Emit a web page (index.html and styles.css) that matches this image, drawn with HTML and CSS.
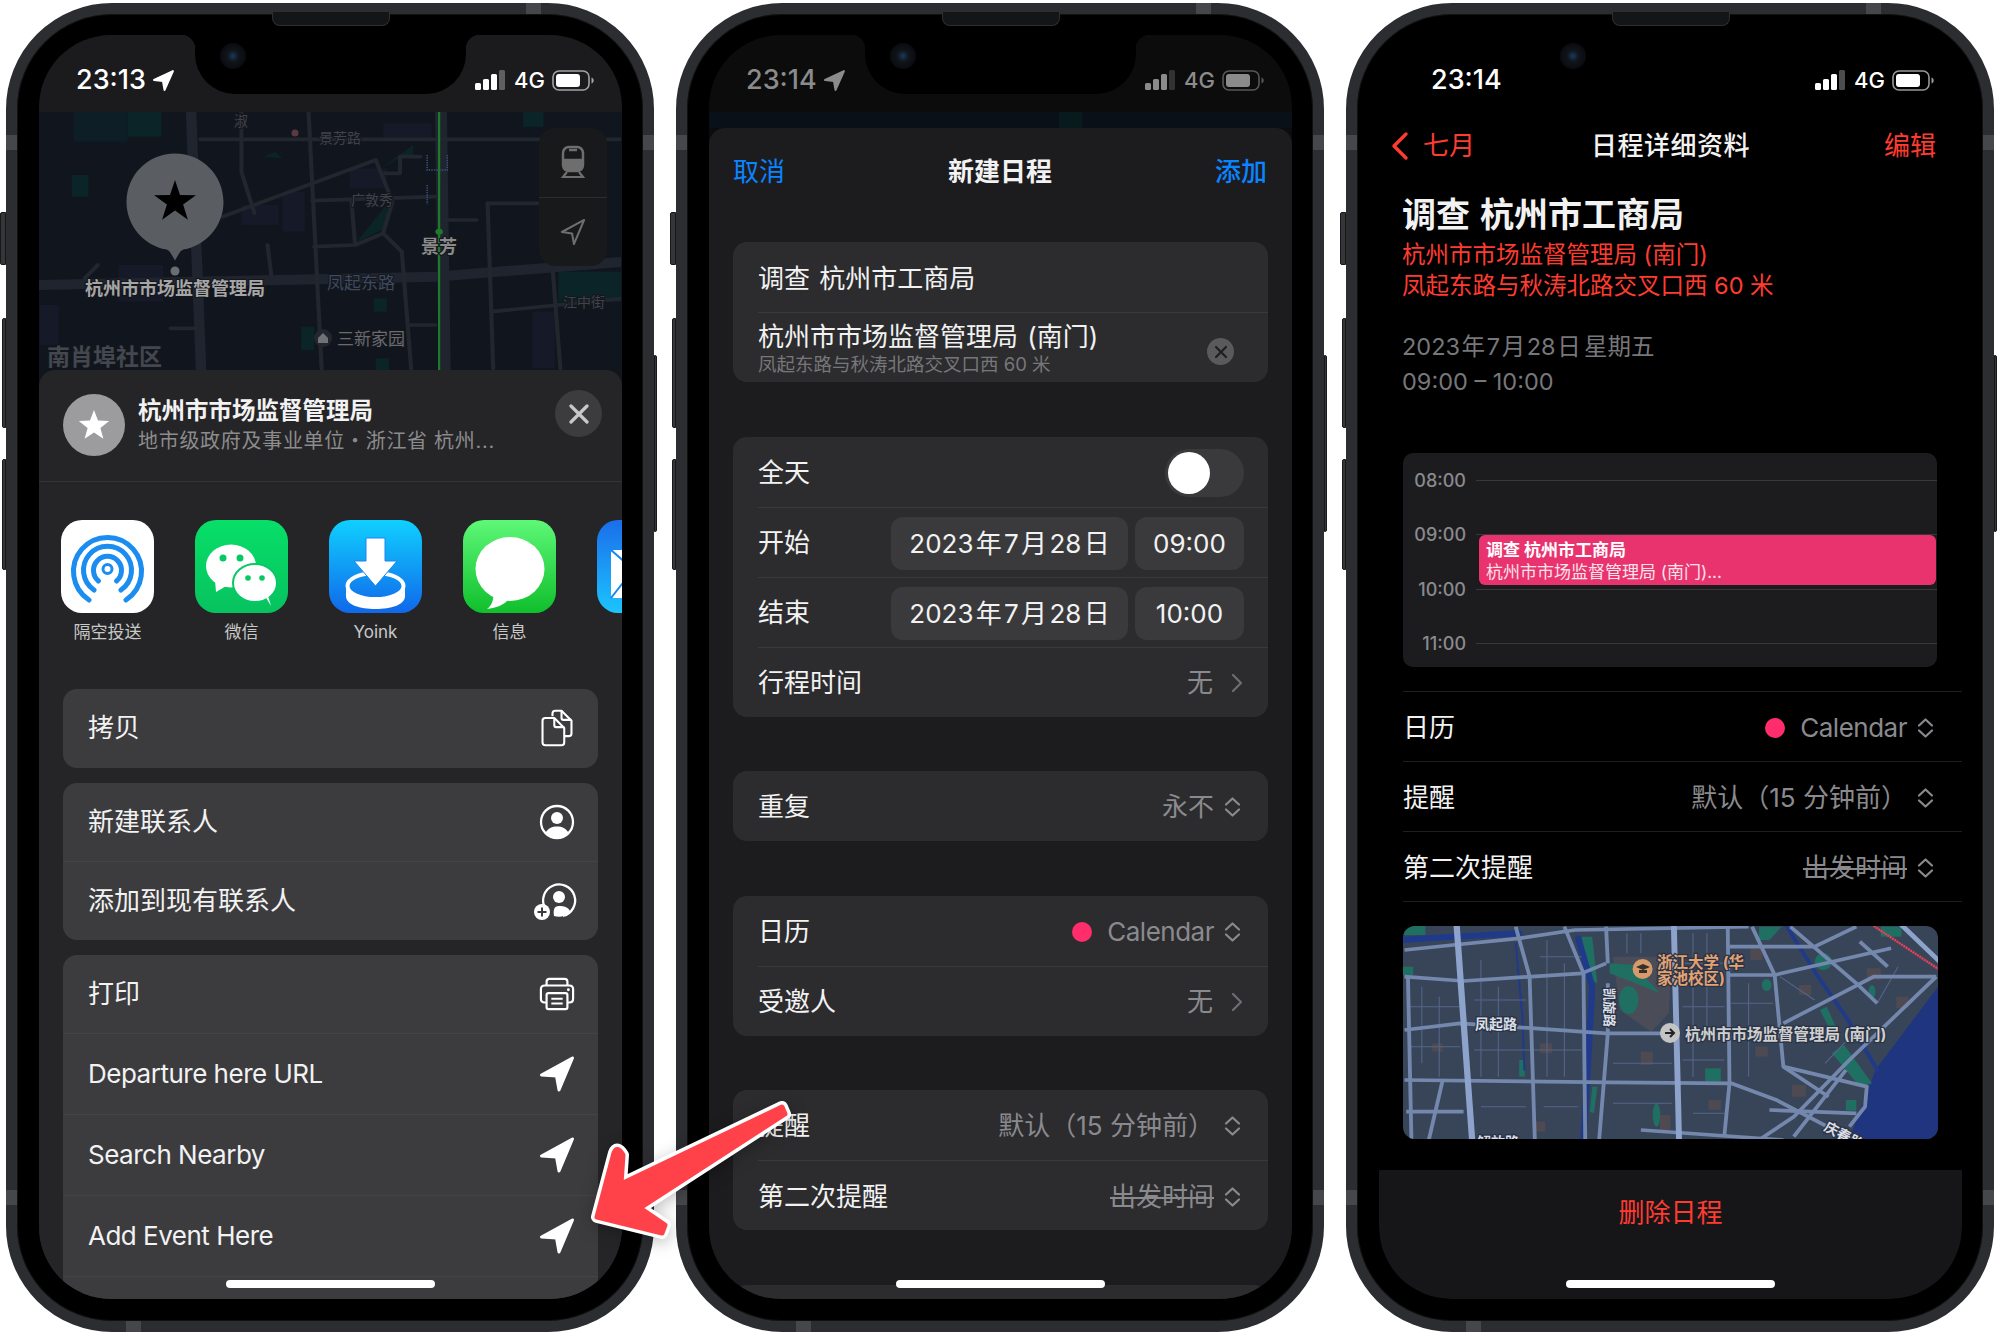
FILE: index.html
```html
<!DOCTYPE html>
<html lang="zh-CN">
<head>
  <meta charset="UTF-8" />
  <title>日程</title>
  <link rel="stylesheet" href="styles.css">
</head>
<body>
  <svg class="sprite" width="0" height="0">
    <symbol id="signal" viewBox="0 0 31 20"><rect x="0" y="13" width="6" height="7" rx="1.5" fill="currentColor"/><rect x="8" y="9" width="6" height="11" rx="1.5" fill="currentColor"/><rect x="16" y="4" width="6" height="16" rx="1.5" fill="currentColor"/><rect x="24" y="0" width="6" height="20" rx="1.5" fill="currentColor" opacity=".3"/></symbol>
    <symbol id="battery" viewBox="0 0 42 21"><rect x="1" y="1" width="36" height="19" rx="6" fill="none" stroke="currentColor" stroke-width="1.6" opacity=".6"/><rect x="4" y="4" width="24" height="13" rx="3" fill="currentColor"/><path d="M39.5 7.5c1.5.5 2.2 1.6 2.2 3s-.7 2.500-2.200 3z" fill="currentColor" opacity=".6"/></symbol>
    <symbol id="updown" viewBox="0 0 17 20"><path d="M2 7.500 8.500 1.500 15 7.500M2 12.500 8.500 18.500 15 12.500" fill="none" stroke="currentColor" stroke-width="2.200" stroke-linecap="round" stroke-linejoin="round"/></symbol>
    <symbol id="chev" viewBox="0 0 12 20"><path d="M2 2 10 10 2 18" fill="none" stroke="currentColor" stroke-width="2.200" stroke-linecap="round" stroke-linejoin="round"/></symbol>
    <symbol id="nav" viewBox="0 0 36 37"><path d="M33.500 2.500 2.500 19.500 17.500 20.500 20 34.500Z" fill="#fff" stroke="#fff" stroke-width="3" stroke-linejoin="round"/></symbol>
  </svg>

  <div class="phones">

    <!-- share sheet -->
    <div class="phone">
      <i class="band-side"></i><i class="band-top"></i>
      <i class="btn btn-mute"></i><i class="btn btn-up"></i><i class="btn btn-down"></i><i class="btn btn-power"></i>
      <i class="speaker"></i>
      <div class="screen screen-share">
        <div class="notch"><i class="camera"></i></div>
        <div class="status">
          <div class="clock">23:13 <svg class="clock-arrow" viewBox="0 0 22 22"><path d="M20 2 2 10.500 10.500 11.500 12 20Z" fill="currentColor" stroke="currentColor" stroke-width="2" stroke-linejoin="round"/></svg></div>
          <div class="status-right">
            <svg class="signal"><use href="#signal"/></svg><span class="net">4G</span><svg class="battery"><use href="#battery"/></svg>
          </div>
        </div>
        <div class="map-top">
          <svg class="map-top-svg" viewBox="0 0 582 274">
            <g transform="translate(1,-7) scale(.373,.3333)">
              <g fill="#0b2428">
                <rect x="85" y="210" width="45" height="65"/><rect x="235" y="20" width="90" height="75"/><rect x="90" y="20" width="145" height="90" fill="#0d1e27"/>
                <rect x="1390" y="500" width="178" height="90"/><rect x="895" y="580" width="35" height="40"/><rect x="700" y="665" width="35" height="70"/>
                <rect x="1295" y="20" width="55" height="45"/><path d="M900 340 935 290 925 370 850 410Z"/><path d="M915 190 1000 120 1000 150 960 160Z"/><rect x="900" y="760" width="35" height="40"/><path d="M600 155 630 140 650 160Z"/>
              </g>
              <g fill="#161928">
                <rect x="540" y="300" width="100" height="60"/><rect x="920" y="55" width="130" height="45"/><rect x="650" y="260" width="60" height="120"/><rect x="210" y="480" width="120" height="110"/><rect x="0" y="600" width="50" height="120"/><rect x="830" y="190" width="100" height="60"/><rect x="1320" y="620" width="60" height="170"/>
              </g>
              <g fill="none" stroke="#20242f" stroke-linecap="round" stroke-linejoin="round">
                <path stroke-width="30" d="M0 540 780 522 1060 515 1568 470"/>
                <path stroke-width="28" d="M405 20 432 800"/>
                <path stroke-width="32" d="M1075 20 1085 800"/>
                <g stroke-width="11" stroke="#22262f">
                  <path d="M430 103H1568"/><path d="M720 20 755 790"/><path d="M540 20V200L575 325"/>
                  <path d="M490 335 900 165 945 290 920 385 845 420 735 425"/><path d="M730 287 1060 275"/><path d="M835 290 845 420"/>
                  <path d="M920 385 970 440 995 790"/><path d="M1200 295H1340"/><path d="M1200 295 1215 790"/><path d="M1210 620 1568 580"/>
                  <path d="M1375 500 1395 790"/><path d="M985 660H1060"/><path d="M155 480 120 520"/><path d="M610 420 620 510"/><path d="M925 205H965V155H1020"/><path d="M350 670H420"/><path d="M1085 345H1170"/>
                </g>
              </g>
              <path d="M1070 20V795" stroke="#1e7a2a" stroke-width="6" fill="none"/>
              <path d="M1038 150V195H1092V150M1038 240V298" stroke="#39507a" stroke-width="4" stroke-dasharray="4 3" fill="none"/>
              <ellipse cx="1070" cy="380" rx="10" ry="9" fill="#1e7a2a"/>
            </g>
            <circle cx="256" cy="21" r="3.500" fill="#5a3a3e"/>
            <path d="M136 41.500c27 0 48.500 21.500 48.500 48.500 0 24-18 44-40 47.500-3 .5-5 5-8.500 11-3.500-6-5.500-10.500-8.500-11-22-3.500-40-23.500-40-47.500 0-27 21.500-48.500 48.500-48.500z" fill="#5a5e63"/>
            <polygon points="136,68 141,83.100 156.900,83.200 144.100,92.600 148.900,107.800 136,98.500 123.100,107.800 127.900,92.600 115.100,83.200 131,83.100" fill="#000"/>
            <circle cx="136" cy="159" r="4.500" fill="#6a6e73"/>
            <text class="mt mt-pin" x="136" y="183" text-anchor="middle">杭州市市场监督管理局</text>
            <text class="mt mt-sub" x="400" y="141" text-anchor="middle">景芳</text>
            <text class="mt mt-road" x="322" y="177" text-anchor="middle" fill="#3d4a60">凤起东路</text>
            <text class="mt mt-small" x="301" y="31" text-anchor="middle">景芳路</text>
            <text class="mt mt-small" x="333" y="93" text-anchor="middle">广敦秀</text>
            <text class="mt mt-small" x="545" y="195" text-anchor="middle">江中街</text>
            <text class="mt mt-small" x="202" y="14" text-anchor="middle">淑</text>
            <circle cx="284" cy="226" r="9" fill="#23262f"/><path d="M279 226 284 221 289 226V231H279Z" fill="#6f7276"/>
            <text class="mt mt-home" x="332" y="233" text-anchor="middle">三新家园</text>
            <text class="mt mt-area" x="8" y="253">南肖埠社区</text>
          </svg>
          <div class="map-panel">
            <div class="map-panel-cell">
              <svg class="train" viewBox="0 0 24 34"><rect x="2" y="2" width="20" height="24" rx="6" fill="none" stroke="currentColor" stroke-width="2.500"/><path d="M2 15H22M8 5H16" stroke="currentColor" stroke-width="2.500"/><path d="M2 14H22V22Q22 26 18 26H6Q2 26 2 22Z" fill="currentColor"/><path d="M6 27 2 32H22L18 27" fill="none" stroke="currentColor" stroke-width="2.200"/></svg>
            </div>
            <div class="map-panel-cell map-panel-line">
              <svg class="train" viewBox="0 0 28 30"><path d="M26 2 2 15 13 16.500 15 28Z" fill="none" stroke="currentColor" stroke-width="2.200" stroke-linejoin="round"/></svg>
            </div>
          </div>
        </div>
        <div class="sheet">
          <div class="sheet-head">
            <div class="place-icon"><svg viewBox="0 0 62 62" width="62" height="62"><polygon points="31,16 35,26.500 46.200,27 37.400,34 40.400,44.800 31,38.600 21.600,44.800 24.600,34 15.800,27 27,26.500" fill="#fff"/></svg></div>
            <div class="place-text">
              <div class="place-name">杭州市市场监督管理局</div>
              <div class="place-sub">地市级政府及事业单位・浙江省 杭州...</div>
            </div>
            <div class="close"><svg viewBox="0 0 20 20" width="20" height="20"><path d="M2 2 18 18M18 2 2 18" stroke="#c8c8c8" stroke-width="3.200" stroke-linecap="round"/></svg></div>
          </div>
          <div class="apps">
            <div class="app">
              <svg class="app-icon" viewBox="0 0 93 93"><rect width="93" height="93" rx="21" fill="#fff"/><g fill="none" stroke="#1b8df0" stroke-width="5" stroke-linecap="round"><path d="M28 80A34 34 0 1 1 65 80"/><path d="M33 70A24 24 0 1 1 60 70"/><path d="M37.500 61A14 14 0 1 1 55.500 61"/></g><circle cx="46.500" cy="49" r="4.500" fill="none" stroke="#1b8df0" stroke-width="3"/></svg>
              <div class="app-name">隔空投送</div>
            </div>
            <div class="app">
              <svg class="app-icon" viewBox="0 0 93 93"><defs><linearGradient id="gw" x1="0" y1="0" x2="0" y2="1"><stop offset="0" stop-color="#07df68"/><stop offset="1" stop-color="#07c25f"/></linearGradient></defs><rect width="93" height="93" rx="21" fill="url(#gw)"/><ellipse cx="36" cy="46" rx="25" ry="21.500" fill="#fff"/><path d="M20 60 21 72 33 65Z" fill="#fff"/><ellipse cx="60" cy="63" rx="22" ry="19" fill="#fff" stroke="#07c964" stroke-width="2"/><path d="M70 76 76 86 72 72Z" fill="#fff"/><g fill="#07c964"><circle cx="28" cy="38" r="3.500"/><circle cx="45" cy="38" r="3.500"/><circle cx="53" cy="58" r="2.800"/><circle cx="67" cy="58" r="2.800"/></g></svg>
              <div class="app-name">微信</div>
            </div>
            <div class="app">
              <svg class="app-icon" viewBox="0 0 93 93"><defs><linearGradient id="gy" x1="0" y1="0" x2="0" y2="1"><stop offset="0" stop-color="#10d0ff"/><stop offset="1" stop-color="#1068ea"/></linearGradient></defs><rect width="93" height="93" rx="21" fill="url(#gy)"/><path d="M17 66V76C17 85 31 89 46.500 89S76 85 76 76V66C76 75 62 80 46.500 80S17 75 17 66Z" fill="#fff"/><ellipse cx="46.500" cy="66" rx="28" ry="13" fill="none" stroke="#fff" stroke-width="4"/><path d="M37 18H56V41H68L46.500 66 25 41H37Z" fill="#fff" stroke="#1a86ee" stroke-width="1"/></svg>
              <div class="app-name">Yoink</div>
            </div>
            <div class="app">
              <svg class="app-icon" viewBox="0 0 93 93"><defs><linearGradient id="gm" x1="0" y1="0" x2="0" y2="1"><stop offset="0" stop-color="#5ef877"/><stop offset="1" stop-color="#0fbf2c"/></linearGradient></defs><rect width="93" height="93" rx="21" fill="url(#gm)"/><ellipse cx="47" cy="49" rx="34.500" ry="32" fill="#fff"/><path d="M30 72C31 80 29 85 24 89 33 88 41 85 46 79Z" fill="#fff"/></svg>
              <div class="app-name">信息</div>
            </div>
            <div class="app">
              <svg class="app-icon" viewBox="0 0 93 93"><defs><linearGradient id="gl" x1="0" y1="0" x2="0" y2="1"><stop offset="0" stop-color="#1a6eea"/><stop offset="1" stop-color="#1cc4ff"/></linearGradient></defs><rect width="93" height="93" rx="21" fill="url(#gl)"/><rect x="14" y="30" width="65" height="48" rx="3" fill="#fff"/><path d="M14 30 46 58 79 30M14 78 36 50" fill="none" stroke="#1a86ee" stroke-width="2"/></svg>
            </div>
          </div>
          <div class="group">
            <div class="action"><span>拷贝</span>
              <svg class="action-icon" viewBox="0 0 36 42"><g fill="none" stroke="#fff" stroke-width="2.300" stroke-linejoin="round"><path d="M13 8V5Q13 2 16 2H23L34 13V27Q34 30 31 30H26"/><path d="M23 2V10Q23 12 25 12H34"/><path d="M5 10H15L26 21V37Q26 40 23 40H5Q2 40 2 37V13Q2 10 5 10Z"/><path d="M15 10V18Q15 20 17 20H26"/></g></svg>
            </div>
          </div>
          <div class="group">
            <div class="action"><span>新建联系人</span>
              <svg class="action-icon" viewBox="0 0 36 36"><circle cx="18" cy="18" r="16" fill="none" stroke="#fff" stroke-width="2.300"/><circle cx="18" cy="14" r="6" fill="#fff"/><path d="M6.500 29C9 24 13 22.500 18 22.500S27 24 29.500 29A16 16 0 0 1 6.500 29Z" fill="#fff"/></svg>
            </div>
            <div class="action"><span>添加到现有联系人</span>
              <svg class="action-icon action-icon-free" viewBox="0 0 36 36"><path d="M6 25A16 16 0 1 1 24 33" fill="none" stroke="#fff" stroke-width="2.300"/><circle cx="20" cy="14" r="6" fill="#fff"/><path d="M15 33C14 27 15 23 20 23S29 24 31 28C27 33 21 35 15 33Z" fill="#fff"/><circle cx="3" cy="29" r="8" fill="#fff"/><path d="M-1.500 29H7.500M3 24.500V33.500" stroke="#3c3c3f" stroke-width="2"/></svg>
            </div>
          </div>
          <div class="group">
            <div class="action"><span>打印</span>
              <svg class="action-icon action-icon-free" viewBox="0 0 38 36"><g fill="none" stroke="#fff" stroke-width="2.300" stroke-linejoin="round"><path d="M8 9V5Q8 2 11 2H27Q30 2 30 5V9"/><path d="M8 27H6Q2 27 2 23V13Q2 9 6 9H32Q36 9 36 13V23Q36 27 32 27H30"/><rect x="8" y="17" width="22" height="17" rx="2"/><path d="M13 23H25M13 28H25"/></g><circle cx="31" cy="13.500" r="1.500" fill="#fff"/></svg>
            </div>
            <div class="action action-lg"><span class="en">Departure here URL</span><svg class="action-icon"><use href="#nav"/></svg></div>
            <div class="action action-lg"><span class="en">Search Nearby</span><svg class="action-icon"><use href="#nav"/></svg></div>
            <div class="action action-lg"><span class="en">Add Event Here</span><svg class="action-icon"><use href="#nav"/></svg></div>
            <div class="action action-lg"></div>
          </div>
        </div>
        <div class="home"></div>
      </div>
    </div>

    <!-- new event -->
    <div class="phone">
      <i class="band-side"></i><i class="band-top"></i>
      <i class="btn btn-mute"></i><i class="btn btn-up"></i><i class="btn btn-down"></i><i class="btn btn-power"></i>
      <i class="speaker"></i>
      <div class="screen screen-new">
        <div class="notch"><i class="camera"></i></div>
        <div class="status status-dim">
          <div class="clock">23:14 <svg class="clock-arrow" viewBox="0 0 22 22"><path d="M20 2 2 10.500 10.500 11.500 12 20Z" fill="currentColor" stroke="currentColor" stroke-width="2" stroke-linejoin="round"/></svg></div>
          <div class="status-right">
            <svg class="signal"><use href="#signal"/></svg><span class="net">4G</span><svg class="battery"><use href="#battery"/></svg>
          </div>
        </div>
        <div class="map-strip"></div>
        <div class="form">
          <div class="form-nav">
            <span class="link">取消</span>
            <span class="form-title">新建日程</span>
            <span class="link link-bold">添加</span>
          </div>
          <div class="card">
            <div class="row row-title"><span>调查 杭州市工商局</span></div>
            <div class="row row-place">
              <div>
                <div class="row-place-name">杭州市市场监督管理局 (南门)</div>
                <div class="row-place-sub">凤起东路与秋涛北路交叉口西 60 米</div>
              </div>
              <div class="clear"><svg viewBox="0 0 14 14" width="14" height="14"><path d="M2 2 12 12M12 2 2 12" stroke="#1f1f21" stroke-width="2.200" stroke-linecap="round"/></svg></div>
            </div>
          </div>
          <div class="card">
            <div class="row"><span>全天</span><div class="toggle"><i></i></div></div>
            <div class="row"><span>开始</span><div class="pills"><span class="pill pill-date">2023 年 7 月 28 日</span><span class="pill pill-time">09:00</span></div></div>
            <div class="row"><span>结束</span><div class="pills"><span class="pill pill-date">2023 年 7 月 28 日</span><span class="pill pill-time">10:00</span></div></div>
            <div class="row"><span>行程时间</span><div class="val"><span>无</span><svg class="chev"><use href="#chev"/></svg></div></div>
          </div>
          <div class="card">
            <div class="row"><span>重复</span><div class="val"><span>永不</span><svg class="updown"><use href="#updown"/></svg></div></div>
          </div>
          <div class="card">
            <div class="row"><span>日历</span><div class="val"><i class="dot"></i><span class="en">Calendar</span><svg class="updown"><use href="#updown"/></svg></div></div>
            <div class="row"><span>受邀人</span><div class="val"><span>无</span><svg class="chev"><use href="#chev"/></svg></div></div>
          </div>
          <div class="card">
            <div class="row"><span>提醒</span><div class="val"><span>默认（15 分钟前）</span><svg class="updown"><use href="#updown"/></svg></div></div>
            <div class="row"><span>第二次提醒</span><div class="val"><s>出发时间</s><svg class="updown"><use href="#updown"/></svg></div></div>
          </div>
          <div class="card card-end"></div>
        </div>
        <div class="home"></div>
      </div>
    </div>

    <!-- event details -->
    <div class="phone">
      <i class="band-side"></i><i class="band-top"></i>
      <i class="btn btn-mute"></i><i class="btn btn-up"></i><i class="btn btn-down"></i><i class="btn btn-power"></i>
      <i class="speaker"></i>
      <div class="screen screen-detail">
        <div class="notch"><i class="camera"></i></div>
        <div class="status status-plain">
          <div class="clock">23:14</div>
          <div class="status-right">
            <svg class="signal"><use href="#signal"/></svg><span class="net">4G</span><svg class="battery"><use href="#battery"/></svg>
          </div>
        </div>
        <div class="detail-nav">
          <div class="back"><svg viewBox="0 0 20 30" width="20" height="30"><path d="M16 3 4 15 16 27" fill="none" stroke="#ff3b30" stroke-width="3.400" stroke-linecap="round" stroke-linejoin="round"/></svg><span>七月</span></div>
          <span class="detail-title">日程详细资料</span>
          <span class="edit">编辑</span>
        </div>
        <div class="event-info">
          <div class="event-name">调查 杭州市工商局</div>
          <div class="event-place">杭州市市场监督管理局 (南门)</div>
          <div class="event-place">凤起东路与秋涛北路交叉口西 60 米</div>
          <div class="event-date">2023 年 7 月 28 日 &nbsp;星期五</div>
          <div class="event-date event-date-2">09:00 – 10:00</div>
        </div>
        <div class="day">
          <div class="hour"><span>08:00</span><i></i></div>
          <div class="hour"><span>09:00</span><i></i></div>
          <div class="hour"><span>10:00</span><i></i></div>
          <div class="hour"><span>11:00</span><i></i></div>
          <div class="day-event">
            <div class="day-event-name">调查 杭州市工商局</div>
            <div>杭州市市场监督管理局 (南门)...</div>
          </div>
        </div>
        <div class="opts">
          <div class="opt"><span>日历</span><div class="val"><i class="dot"></i><span class="en">Calendar</span><svg class="updown"><use href="#updown"/></svg></div></div>
          <div class="opt"><span>提醒</span><div class="val"><span>默认（15 分钟前）</span><svg class="updown"><use href="#updown"/></svg></div></div>
          <div class="opt"><span>第二次提醒</span><div class="val"><s>出发时间</s><svg class="updown"><use href="#updown"/></svg></div></div>
        </div>
        <svg class="map-small" viewBox="0 0 535 213">
          <rect width="535" height="213" fill="#384559"/>
          <g transform="translate(-2,-6) scale(.3476,.3333)">
            <path d="M1545 200 1365 450 1285 670H1550Z" fill="#20357f"/>
            <path d="M610 110H780L770 280 720 335 630 270Z" fill="#4a4d58"/>
            <g fill="#1f6f62">
              <rect x="0" y="15" width="70" height="30"/><rect x="0" y="140" width="35" height="25"/><path d="M520 50 550 50 565 190 530 170Z"/><path d="M600 130 670 135 745 220 700 200 600 160Z"/>
              <ellipse cx="655" cy="240" rx="28" ry="42"/><rect x="875" y="445" width="45" height="40"/><ellipse cx="1052" cy="195" rx="14" ry="18"/><ellipse cx="1215" cy="125" rx="25" ry="25"/>
              <path d="M1030 20 1095 20 1060 60 1030 60Z"/><path d="M1240 400 1275 375 1355 490 1320 500Z"/><ellipse cx="735" cy="585" rx="11" ry="35"/><path d="M550 500 565 500 555 580 543 575Z"/><rect x="1280" y="540" width="30" height="32"/><rect x="1380" y="20" width="60" height="30"/><ellipse cx="1355" cy="215" rx="10" ry="20"/><path d="M1205 270 1225 260 1255 330 1235 330Z"/><rect x="340" y="420" width="16" height="50"/>
            </g>
            <g fill="#4f4a52">
              <rect x="1005" y="85" width="35" height="35"/><rect x="1145" y="195" width="35" height="30"/><rect x="1340" y="145" width="40" height="35"/><rect x="1425" y="230" width="35" height="35"/><rect x="690" y="395" width="35" height="40"/><rect x="400" y="370" width="35" height="30"/><rect x="1020" y="380" width="35" height="30"/><rect x="1125" y="495" width="40" height="35"/><rect x="885" y="540" width="35" height="30"/><rect x="745" y="585" width="30" height="45"/><rect x="380" y="605" width="35" height="30"/><rect x="90" y="370" width="30" height="25"/>
            </g>
            <g fill="none" stroke="#1f3a8a" stroke-linecap="round">
              <path stroke-width="18" d="M510 55 550 200 540 400 525 655"/>
              <path stroke-width="11" d="M1110 20 1200 170 1280 290 1370 450"/>
              <path stroke-width="18" d="M0 60 150 50 340 40"/>
              <path stroke-width="6" d="M330 70 350 300 355 450"/>
            </g>
            <g fill="none" stroke="#54668a" stroke-width="3">
              <path d="M60 200V430M110 230V470M230 120V470M280 200V470M420 60V470M470 130V470M650 40V100M690 40V100M840 40V470M880 40V330M1000 190V470"/>
              <path d="M20 260H170M20 380H170M210 240H360M210 390H520M400 110H520M610 430H780M810 130H930M810 260H930M810 420H930M950 250H1070M950 350H1080M610 550H780M230 560H360M410 560H510M840 580H930"/>
              <path d="M1190 240 1090 170M1320 320 1220 430M1430 140 1370 250"/>
            </g>
            <g fill="none" stroke="#7488ad" stroke-width="11" stroke-linejoin="round">
              <path d="M10 170 180 183 520 160 590 130"/><path d="M330 20 370 170 385 660"/><path d="M470 20 525 160 530 660"/><path d="M590 20 595 130"/><path d="M595 190V340L570 660"/>
              <path d="M10 330 170 310 590 340H750"/><path d="M10 480 600 487 950 490 1080 540 1300 660"/><path d="M940 20 945 490 930 650"/><path d="M1010 20 1075 165 1100 440 1230 530"/><path d="M20 170 30 660"/>
              <path d="M10 90 150 75 340 55 500 30 1000 20"/><path d="M945 80H1190L1310 20"/><path d="M945 165H1075L1410 85"/><path d="M1100 310 1360 170 1540 170"/><path d="M1120 20 1310 190 1370 250"/><path d="M1540 170 1290 420 1130 590 1030 660"/>
              <path d="M1100 440 1340 500 1335 560 1290 620"/><path d="M1280 450 1130 650"/><path d="M1060 570 1310 580"/><path d="M15 575H180"/><path d="M120 480 80 660"/><path d="M690 630 1100 660"/><path d="M1320 65 1400 140"/>
            </g>
            <g fill="none" stroke="#8ea3cc" stroke-linecap="round">
              <path stroke-width="18" d="M160 15 205 665"/>
              <path stroke-width="17" d="M785 15 800 665"/>
              <path stroke-width="14" d="M1440 15 1550 125"/>
            </g>
            <path d="M1360 18 1550 150" fill="none" stroke="#e8405a" stroke-width="7" stroke-dasharray="6 2"/>
          </g>
          <circle cx="239.600" cy="43" r="10" fill="#d89a6a"/><path d="M233 41 240 38 247 41 240 44ZM236 44V47H244V44" fill="#33302e"/>
          <text class="ms ms-poi" x="254" y="42">浙江大学 (华</text>
          <text class="ms ms-poi" x="254" y="58">家池校区)</text>
          <circle cx="267" cy="107" r="10" fill="#c4c4c4"/><path d="M262 107H270M267 103 271 107 267 111" fill="none" stroke="#222" stroke-width="2"/>
          <text class="ms ms-place" x="282" y="114">杭州市市场监督管理局 (南门)</text>
          <text class="ms ms-road" x="72" y="103">凤起路</text>
          <text class="ms ms-road ms-road-small" transform="translate(202,62) rotate(90)">凯旋路</text>
          <text class="ms ms-road" x="74" y="221">解放路</text>
          <text class="ms ms-road" transform="translate(420,204) rotate(28)">庆春路</text>
        </svg>
        <div class="delete"><span>删除日程</span></div>
        <div class="home"></div>
      </div>
    </div>
  </div>

  <svg class="arrow" viewBox="0 0 210 140">
    <path class="arrow-edge" d="M29 137 46 73Q49 65 55 75L53 104 214 27 217 34 72 128 97 145 94 153Z"/>
    <path class="arrow-fill" d="M29 137 46 73Q49 65 55 75L53 104 214 27 217 34 72 128 97 145 94 153Z"/>
  </svg>
</body>
</html>
```

FILE: styles.css
```css
* {
  box-sizing: border-box;
}
html, body {
  margin: 0;
  background: #fff;
}
body {
  position: relative;
  width: 2000px;
  height: 1334px;
  overflow: hidden;
  font-family: "Inter", "Noto Sans CJK SC", sans-serif;
  color: #f2f2f2;
}
.sprite {
  position: absolute;
}
.phones {
  display: flex;
  gap: 22px;
  padding: 3px 0 0 6px;
}
.en {
  letter-spacing: -.5px;
}

/* hardware */
.phone {
  position: relative;
  width: 648px;
  height: 1329px;
  padding: 21px 21px 22px 22px;
  background: #000;
  border: 11px solid #2b2d31;
  border-radius: 106px;
  box-shadow: inset 0 0 0 1px #111;
}
.band-side {
  position: absolute;
  left: -11px;
  top: 121px;
  width: 11px;
  height: 15px;
  background: #45474b;
  box-shadow: 637px 0 #45474b, 0 1055px #45474b, 637px 1055px #45474b;
}
.band-top {
  position: absolute;
  left: 509px;
  top: -11px;
  width: 15px;
  height: 11px;
  background: #45474b;
  box-shadow: -400px 1318px #45474b;
}
.btn {
  position: absolute;
  background: #34363a;
  border: 1px solid #17181a;
}
.btn-mute { left: -17px; top: 198px; width: 6px; height: 53px; border-radius: 2px 0 0 2px; }
.btn-up { left: -15px; top: 304px; width: 4px; height: 110px; border-radius: 2px 0 0 2px; }
.btn-down { left: -15px; top: 445px; width: 4px; height: 111px; border-radius: 2px 0 0 2px; }
.btn-power { right: -14px; top: 341px; width: 3px; height: 177px; border-radius: 0 2px 2px 0; }
.speaker {
  position: absolute;
  left: 255px;
  top: -2px;
  width: 118px;
  height: 14px;
  background: #141517;
  border: 1px solid #2d2f33;
  border-top: 0;
  border-radius: 0 0 8px 8px;
}
.screen {
  position: relative;
  display: flex;
  flex-direction: column;
  width: 583px;
  height: 1264px;
  overflow: hidden;
  border-radius: 72px;
}
.screen-share { background: #1b1b1d; }
.screen-new { background: #0c0c0d; }
.screen-detail { background: #000; }
.notch {
  position: absolute;
  left: 156px;
  top: 0;
  z-index: 2;
  width: 271px;
  height: 59px;
  background: #000;
  border-radius: 0 0 40px 40px;
}
.notch::before, .notch::after {
  content: "";
  position: absolute;
  top: 0;
  width: 14px;
  height: 14px;
}
.notch::before {
  left: -14px;
  background: radial-gradient(circle at 0 100%, transparent 14px, #000 14.5px);
}
.notch::after {
  right: -14px;
  background: radial-gradient(circle at 100% 100%, transparent 14px, #000 14.5px);
}
.camera {
  position: absolute;
  left: 25px;
  top: 8px;
  width: 26px;
  height: 26px;
  border-radius: 50%;
  background: radial-gradient(circle, #1a3a5c 0, #10161c 30%, #0b0c0f 65%);
}
.home {
  position: absolute;
  left: 187px;
  bottom: 11px;
  z-index: 2;
  width: 209px;
  height: 8px;
  border-radius: 4px;
  background: #fff;
}

/* status bar */
.status {
  flex: none;
  display: flex;
  justify-content: space-between;
  align-items: center;
  height: 77px;
  padding: 28px 28px 15px 37px;
  color: #fff;
}
.status-dim {
  color: #8b8b8b;
}
.status-plain {
  padding-left: 52px;
}
.clock {
  display: flex;
  align-items: center;
  gap: 6px;
  font-size: 27px;
  font-weight: 500;
  line-height: 34px;
}
.clock-arrow {
  width: 23px;
  height: 23px;
}
.status-right {
  display: flex;
  align-items: center;
  width: 119px;
}
.signal {
  width: 31px;
  height: 20px;
  margin-right: 8px;
}
.net {
  width: 38px;
  font-size: 22px;
  font-weight: 500;
  line-height: 30px;
}
.battery {
  width: 42px;
  height: 21px;
}

/* share sheet */
.map-top {
  position: relative;
  flex: none;
  height: 274px;
  margin-bottom: -16px;
  background: #11161e;
}
.map-top-svg {
  display: block;
  width: 582px;
  height: 274px;
}
.mt {
  paint-order: stroke;
  stroke: #14161c;
  stroke-width: 2px;
}
.mt-pin { font-size: 18px; font-weight: 700; fill: #a6a6a6; }
.mt-sub { font-size: 18px; font-weight: 700; fill: #8a8a8a; }
.mt-road { font-size: 17px; }
.mt-small { font-size: 14px; fill: #3f434c; }
.mt-home { font-size: 17px; fill: #696b70; }
.mt-area { font-size: 23px; font-weight: 700; fill: #43474f; }
.map-panel {
  position: absolute;
  right: 15px;
  top: 16px;
  display: flex;
  flex-direction: column;
  width: 68px;
  height: 138px;
  border-radius: 16px;
  background: #17191b;
  color: #6e6e6e;
}
.map-panel-cell {
  flex: 1;
  display: flex;
  align-items: center;
  justify-content: center;
}
.map-panel-line {
  border-top: 1px solid #2b2d30;
}
.train {
  width: 26px;
  height: 34px;
}
.sheet {
  position: relative;
  flex: 1;
  min-height: 0;
  border-radius: 16px 16px 0 0;
  background: #252527;
}
.sheet-head {
  display: flex;
  height: 112px;
  padding: 24px 20px 0 24px;
  border-bottom: 1px solid #343436;
}
.place-icon {
  width: 62px;
  height: 62px;
  border-radius: 50%;
  background: #9c9c9e;
}
.place-text {
  flex: 1;
  min-width: 0;
  margin-left: 13px;
}
.place-name {
  font-size: 23.500px;
  font-weight: 700;
  line-height: 32px;
  margin-top: 1px;
}
.place-sub {
  font-size: 20px;
  letter-spacing: .7px;
  line-height: 28px;
  color: #8c8c8e;
  white-space: nowrap;
}
.close {
  display: flex;
  align-items: center;
  justify-content: center;
  width: 47px;
  height: 47px;
  margin-top: -4px;
  border-radius: 50%;
  background: #3c3c3e;
}
.apps {
  display: flex;
  gap: 41px;
  height: 207px;
  padding: 38px 0 0 22px;
  overflow: hidden;
}
.app {
  flex: none;
  width: 93px;
  text-align: center;
}
.app-icon {
  display: block;
  width: 93px;
  height: 93px;
}
.app-name {
  margin-top: 6px;
  font-size: 17px;
  line-height: 26px;
  color: #c9c9c9;
}
.group {
  margin: 0 24px 15px;
  border-radius: 14px;
  background: #3c3c3f;
  overflow: hidden;
}
.action {
  display: flex;
  align-items: center;
  justify-content: space-between;
  height: 78.500px;
  padding: 0 23px 0 25px;
  font-size: 26px;
  line-height: 36px;
}
.action + .action {
  border-top: 1px solid #444447;
}
.action-lg {
  height: 81px;
}
.action-icon {
  width: 36px;
  height: 38px;
}
.action-icon-free {
  overflow: visible;
}

/* new event */
.map-strip {
  flex: none;
  height: 16px;
  background: linear-gradient(90deg, #0a1018 0 60%, #081a1c 60% 64%, #0a1018 64%);
}
.form {
  flex: 1;
  min-height: 0;
  padding: 0 24px;
  border-radius: 16px 16px 0 0;
  background: #1c1c1e;
}
.form-nav {
  display: flex;
  justify-content: space-between;
  align-items: center;
  height: 83px;
  margin-bottom: 31px;
}
.link {
  font-size: 26px;
  color: #0a84ff;
}
.link-bold {
  font-weight: 500;
  margin-right: 1px;
}
.form-title {
  font-size: 26px;
  font-weight: 700;
}
.card {
  margin-bottom: 54.500px;
  padding-left: 25px;
  border-radius: 14px;
  background: #2c2c2e;
  overflow: hidden;
}
.card-end {
  height: 80px;
}
.row {
  display: flex;
  align-items: center;
  justify-content: space-between;
  height: 70px;
  padding: 2px 24px 0 0;
  font-size: 26px;
  line-height: 36px;
}
.row + .row {
  border-top: 1px solid #3a3a3c;
}
.row-title {
  padding-top: 4px;
  word-spacing: 2px;
}
.row-place-name {
  line-height: 32px;
  margin-top: -1px;
  word-spacing: 2px;
}
.row-place-sub {
  font-size: 18.500px;
  line-height: 22px;
  color: #77777b;
}
.clear {
  display: flex;
  align-items: center;
  justify-content: center;
  width: 27px;
  height: 27px;
  margin-top: 6px;
  margin-right: 10px;
  border-radius: 50%;
  background: #5a5a5d;
}
.toggle {
  width: 79px;
  height: 48px;
  padding: 3px;
  border-radius: 24px;
  background: #3a3a3c;
}
.toggle i {
  display: block;
  width: 42px;
  height: 42px;
  border-radius: 50%;
  background: #fff;
}
.pills {
  display: flex;
  gap: 7px;
}
.pill {
  height: 53px;
  border-radius: 12px;
  background: #3a3a3c;
  font-size: 26px;
  line-height: 53px;
  text-align: center;
  word-spacing: -5px;
}
.pill-date { width: 237px; }
.pill-time { width: 109px; }
.val {
  display: flex;
  align-items: center;
  gap: 10px;
  font-size: 26px;
  color: #8a8a8e;
}
.val s {
  text-decoration-thickness: 2px;
}
.dot {
  width: 20px;
  height: 20px;
  margin-right: 5px;
  border-radius: 50%;
  background: #ff2d6b;
}
.updown {
  width: 17px;
  height: 20px;
  margin-right: 3px;
  color: #8a8a8e;
}
.chev {
  width: 12px;
  height: 20px;
  margin: 0 1px 0 8px;
  color: #6e6e72;
}

/* event details */
.detail-nav {
  flex: none;
  display: grid;
  grid-template-columns: 1fr auto 1fr;
  align-items: center;
  height: 68px;
  padding: 0 26px;
  font-size: 26px;
  line-height: 36px;
}
.back {
  display: flex;
  align-items: center;
  gap: 13px;
  margin-left: -15px;
  color: #ff3b30;
}
.detail-title {
  font-weight: 500;
  letter-spacing: .5px;
}
.edit {
  justify-self: end;
  color: #ff3b30;
}
.event-info {
  flex: none;
  padding: 14px 23px 0;
}
.event-name {
  font-size: 34px;
  font-weight: 700;
  line-height: 42px;
  margin-bottom: 3px;
  word-spacing: 2px;
}
.event-place {
  font-size: 23.500px;
  line-height: 31px;
  color: #ff3b30;
}
.event-date {
  margin-top: 28px;
  font-size: 23.500px;
  line-height: 35px;
  color: #77777b;
  word-spacing: -5px;
}
.event-date-2 {
  margin-top: 0;
  word-spacing: 0;
}
.day {
  position: relative;
  flex: none;
  height: 214px;
  margin: 54px 25px 0 24px;
  border-radius: 10px;
  background: #1c1c1e;
  overflow: hidden;
}
.hour {
  display: flex;
  align-items: center;
  gap: 10px;
  height: 54.500px;
}
.hour span {
  width: 63px;
  font-size: 18px;
  font-weight: 500;
  text-align: right;
  color: #8a8a8e;
}
.hour i {
  flex: 1;
  height: 1px;
  background: #38383a;
}
.day-event {
  position: absolute;
  left: 76px;
  right: 1px;
  top: 82px;
  height: 50px;
  padding: 5px 7px;
  border-radius: 6px;
  background: #e9336f;
  font-size: 17px;
  line-height: 21.500px;
  color: #fbe3ea;
  white-space: nowrap;
}
.day-event-name {
  font-weight: 700;
  color: #fff;
}
.opts {
  flex: none;
  margin: 24px 0 0 24px;
  border-top: 1px solid #1f1f21;
}
.opt {
  display: flex;
  align-items: center;
  justify-content: space-between;
  height: 70px;
  padding: 2px 25px 0 0;
  border-bottom: 1px solid #1f1f21;
  font-size: 26px;
  line-height: 36px;
}
.map-small {
  flex: none;
  display: block;
  width: 535px;
  height: 213px;
  margin: 24px 0 0 24px;
  border-radius: 12px;
}
.ms {
  paint-order: stroke;
  stroke: #2a3345;
  stroke-width: 2.500px;
}
.ms-poi { font-size: 15.500px; font-weight: 700; fill: #e2a272; }
.ms-place { font-size: 15.500px; font-weight: 700; fill: #cfcfcf; }
.ms-road { font-size: 14px; font-weight: 700; fill: #d9dde6; }
.ms-road-small { font-size: 13px; }
.delete {
  flex: 1;
  margin-top: 31px;
  padding-top: 25px;
  border-radius: 0 0 72px 72px;
  background: #161618;
  font-size: 26px;
  line-height: 36px;
  text-align: center;
  color: #ff3b30;
}

/* red callout */
.arrow {
  position: absolute;
  left: 568px;
  top: 1080px;
  width: 210px;
  height: 140px;
  overflow: visible;
  filter: drop-shadow(0 4px 8px rgba(0, 0, 0, .25));
}
.arrow-edge, .arrow-fill {
  stroke-linejoin: round;
}
.arrow-edge {
  fill: #fff;
  stroke: #fff;
  stroke-width: 12px;
}
.arrow-fill {
  fill: #ff4249;
  stroke: #ff4249;
  stroke-width: 5px;
}
```
